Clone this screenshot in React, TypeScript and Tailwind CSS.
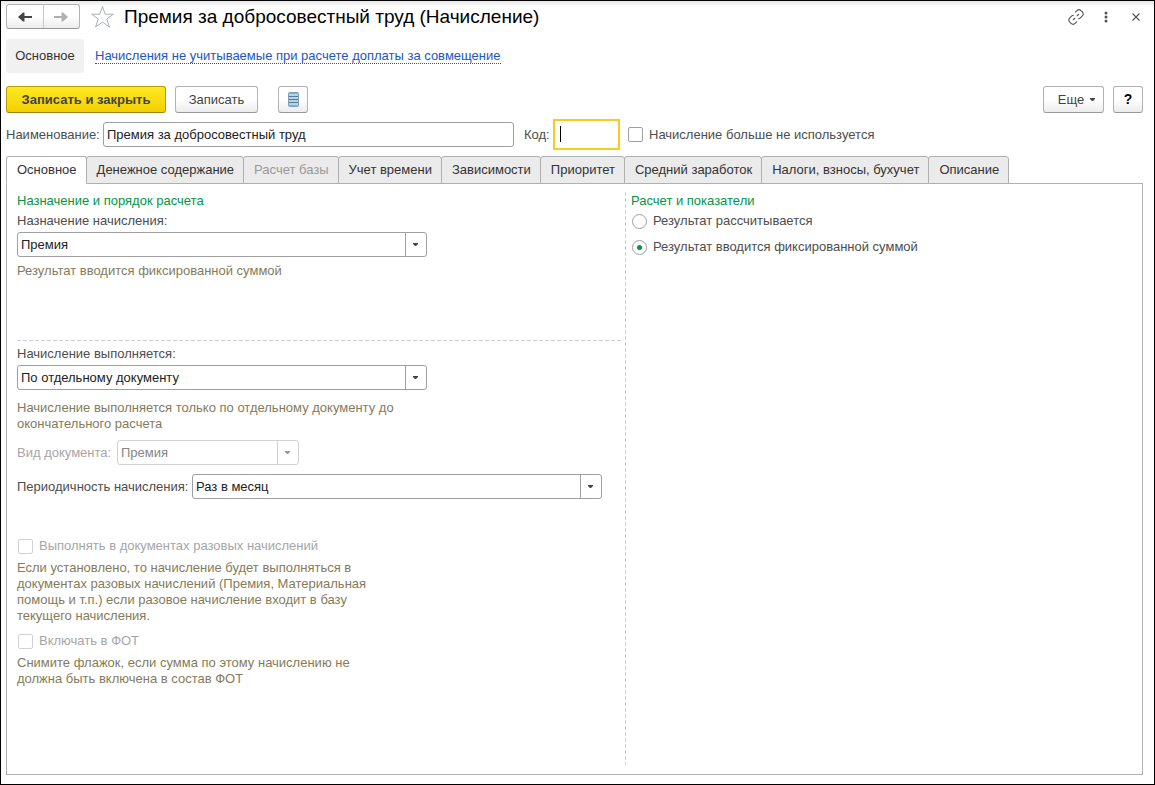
import React from "react";
import clsx from "clsx";

const tabs = [
  { title: "Основное", active: true },
  { title: "Денежное содержание" },
  { title: "Расчет базы", disabled: true },
  { title: "Учет времени" },
  { title: "Зависимости" },
  { title: "Приоритет" },
  { title: "Средний заработок" },
  { title: "Налоги, взносы, бухучет" },
  { title: "Описание" },
];

const buttonStyle =
  "flex h-[27px] items-center justify-center rounded-[3px] border border-[#b3b3b3] border-b-[#989898] bg-linear-to-b from-white from-50% to-[#ececec] text-[#444]";

const Caret = () => (
  <svg width="5" height="3" viewBox="0 0 5 3" fill="currentColor">
    <path d="M0 0h5v1L3 3H2L0 1z" />
  </svg>
);

type ComboProps = {
  id: string;
  value: string;
  disabled?: boolean;
  className?: string;
};

const Combo = ({ id, value, disabled, className }: ComboProps) => (
  <div
    className={clsx(
      "relative flex h-[25px] max-w-full rounded-[3px] border bg-white",
      disabled ? "border-[#d2d2d2]" : "border-[#a0a0a0]",
      className
    )}
  >
    <select
      id={id}
      disabled={disabled}
      defaultValue={value}
      className={clsx(
        "min-w-0 flex-1 appearance-none bg-transparent pl-[3px] opacity-100 outline-none",
        disabled ? "text-[#858585]" : "text-[#222]"
      )}
    >
      <option>{value}</option>
    </select>
    <span
      className={clsx(
        "pointer-events-none flex w-[21px] items-center justify-center border-l pr-px",
        disabled
          ? "border-[#d2d2d2] text-[#999]"
          : "border-[#a0a0a0] text-[#444]"
      )}
    >
      <Caret />
    </span>
  </div>
);

type CheckProps = { label: string; disabled?: boolean };

const Check = ({ label, disabled }: CheckProps) => (
  <label
    className={clsx(
      "flex items-center gap-[6px] leading-4",
      disabled ? "text-[#a6a6a6]" : "text-[#4d4d4d]"
    )}
  >
    <input
      type="checkbox"
      disabled={disabled}
      className={clsx(
        "size-[15px] shrink-0 appearance-none rounded-[2px] border bg-white",
        disabled ? "border-[#d2d2d2]" : "border-[#a0a0a0]"
      )}
    />
    {label}
  </label>
);

const Radio = ({ label, checked }: { label: string; checked?: boolean }) => (
  <label className="flex items-center gap-[6px] leading-4">
    <input
      type="radio"
      name="calculation"
      defaultChecked={checked}
      className="grid size-[15px] shrink-0 appearance-none place-items-center rounded-full border border-[#a0a0a0] bg-white before:size-[5px] before:rounded-full checked:before:bg-[#009646]"
    />
    {label}
  </label>
);

const Hint = ({ children }: { children: React.ReactNode }) => (
  <p className="leading-4 text-[#857b5a]">{children}</p>
);

const TitleBar = () => (
  <header className="flex h-[25px] items-center">
    <div className="flex h-[25px] w-[74px] rounded-[3px] border border-[#b3b3b3] border-b-[#989898] bg-linear-to-b from-white from-50% to-[#ececec]">
      <button
        type="button"
        aria-label="Назад"
        className="flex flex-1 items-center justify-center border-r border-[#c8c8c8] text-[#444]"
      >
        <svg width="14" height="10" viewBox="0 0 14 10" fill="currentColor">
          <path d="M0 5L5 0.500h1.500V4H14v2H6.500v3.500H5z" />
        </svg>
      </button>
      <button
        type="button"
        aria-label="Вперед"
        className="flex flex-1 items-center justify-center text-[#b0b0b0]"
      >
        <svg width="14" height="10" viewBox="0 0 14 10" fill="currentColor">
          <path d="M14 5L9 0.500H7.500V4H0v2h7.500v3.500H9z" />
        </svg>
      </button>
    </div>
    <button type="button" aria-label="Добавить в избранное" className="ml-[10px]">
      <svg width="25" height="24" viewBox="0 0 25 24" fill="none" stroke="#aab0b5">
        <path d="M12.500 1.500l2.700 7.700h8.200l-6.600 4.800 2.600 8-6.900-4.900-6.900 4.900 2.600-8-6.600-4.800h8.200z" />
      </svg>
    </button>
    <h1 className="ml-[9px] flex-1 text-[19px] leading-6 text-black">
      Премия за добросовестный труд (Начисление)
    </h1>
    <div className="flex items-center text-[#555]">
      <button type="button" aria-label="Получить ссылку">
        <svg width="16" height="16" viewBox="0 0 16 16" fill="none" stroke="currentColor" strokeWidth="1.100">
          <path d="M7.200 3.300l1.500-1.500a3.200 3.200 0 0 1 4.500 0l.9.900a3.200 3.200 0 0 1 0 4.500l-1.600 1.600a3.200 3.200 0 0 1-2.300.900" />
          <path d="M8.800 12.700l-1.500 1.500a3.200 3.200 0 0 1-4.500 0l-.9-.9a3.200 3.200 0 0 1 0-4.500l1.600-1.600a3.200 3.200 0 0 1 2.300-.900" />
          <path d="M5 11l2.200-2.200M8.800 7.200L11 5" />
        </svg>
      </button>
      <button type="button" aria-label="Сервис" className="ml-5">
        <svg width="4" height="12" viewBox="0 0 4 12" fill="currentColor">
          <circle cx="2" cy="2" r="1.500" />
          <circle cx="2" cy="6" r="1.500" />
          <circle cx="2" cy="10" r="1.500" />
        </svg>
      </button>
      <button type="button" aria-label="Закрыть" className="ml-6 mr-[3px]">
        <svg width="8" height="8" viewBox="0 0 8 8" fill="none" stroke="currentColor" strokeWidth="1.100">
          <path d="M0.500 0.500l7 7M7.500 0.500l-7 7" />
        </svg>
      </button>
    </div>
  </header>
);

const CommandBar = () => (
  <div className="mt-[13px] flex items-center">
    <button
      type="button"
      className="flex h-[27px] w-40 items-center justify-center rounded-[3px] border border-[#b89d00] border-b-[#9a8400] bg-linear-to-b from-[#ffe81f] to-[#f2d000] font-bold text-[#444]"
    >
      Записать и закрыть
    </button>
    <button type="button" className={clsx(buttonStyle, "ml-[9px] w-[83px]")}>
      Записать
    </button>
    <button
      type="button"
      aria-label="Список"
      className={clsx(buttonStyle, "ml-5 w-[30px]")}
    >
      <svg width="11" height="15" viewBox="0 0 11 15">
        <rect x="0.500" y="0.500" width="10" height="14" rx="1" fill="#b9d3e4" stroke="#7f9fb5" />
        <path d="M1 4.500h9M1 7.500h9M1 10.500h9" stroke="#4f7f9f" />
        <path d="M1 1.500h9M1 13.500h9" stroke="#8fb0c6" />
      </svg>
    </button>
    <button
      type="button"
      className={clsx(buttonStyle, "ml-auto w-[61px] gap-[6px] pl-[6px]")}
    >
      Еще
      <Caret />
    </button>
    <button
      type="button"
      className={clsx(buttonStyle, "ml-[9px] w-[30px] text-[14px] font-bold text-black")}
    >
      ?
    </button>
  </div>
);

const NameRow = () => (
  <div className="mt-[6px] flex h-[31px] items-center text-[#4d4d4d]">
    <label htmlFor="name" className="w-[97px] shrink-0 whitespace-nowrap">
      Наименование:
    </label>
    <input
      id="name"
      type="text"
      defaultValue="Премия за добросовестный труд"
      className="h-[25px] w-[411px] min-w-0 rounded-[3px] border border-[#a0a0a0] bg-white px-[3px] text-[#222] outline-none"
    />
    <label htmlFor="code" className="ml-[10px] w-[29px] shrink-0">
      Код:
    </label>
    <div className="relative mr-2 shrink-0">
      <input
        id="code"
        type="text"
        className="block h-[31px] w-[67px] border-2 border-[#f8cb1e] bg-white px-[6px] text-[#222] caret-transparent outline-none"
      />
      <span className="absolute left-[7px] top-[7px] h-4 w-px bg-black" />
    </div>
    <Check label="Начисление больше не используется" />
  </div>
);

const Tabs = () => (
  <div role="tablist" className="relative z-10 mt-[6px] -mb-px flex">
    {tabs.map((tab) => (
      <button
        key={tab.title}
        type="button"
        role="tab"
        aria-selected={!!tab.active}
        disabled={tab.disabled}
        className={clsx(
          "-mr-px h-7 whitespace-nowrap rounded-t-[3px] border border-[#b0b0b0] pl-[10px] pr-[9px]",
          tab.active ? "border-b-white bg-white" : "bg-[#ebebeb]",
          tab.disabled ? "text-[#999]" : "text-[#333]"
        )}
      >
        {tab.title}
      </button>
    ))}
  </div>
);

const SettingsColumn = () => (
  <div className="w-[604px] pt-px">
    <h2 className="leading-4 text-[#009646]">Назначение и порядок расчета</h2>
    <div className="flex min-h-[131px] flex-col pt-1">
      <label htmlFor="purpose" className="mb-[3px] leading-4">
        Назначение начисления:
      </label>
      <Combo id="purpose" value="Премия" className="w-[410px]" />
      <div className="mt-[6px]">
        <Hint>Результат вводится фиксированной суммой</Hint>
      </div>
    </div>
    <div className="h-px bg-[repeating-linear-gradient(90deg,#d0d0d0_0_4px,transparent_4px_6px)]" />
    <div className="flex flex-col pt-[5px]">
      <label htmlFor="execution" className="mb-[3px] leading-4">
        Начисление выполняется:
      </label>
      <Combo id="execution" value="По отдельному документу" className="w-[410px]" />
      <div className="mt-[10px] max-w-[400px]">
        <Hint>
          Начисление выполняется только по отдельному документу до
          окончательного расчета
        </Hint>
      </div>
    </div>
    <div className="mt-2 flex items-center">
      <label htmlFor="document" className="w-[100px] text-[#a6a6a6]">
        Вид документа:
      </label>
      <Combo id="document" value="Премия" disabled className="w-[182px]" />
    </div>
    <div className="mt-[9px] flex items-center">
      <label htmlFor="period" className="w-[175px] whitespace-nowrap">
        Периодичность начисления:
      </label>
      <Combo id="period" value="Раз в месяц" className="w-[410px]" />
    </div>
    <div className="mt-[39px] flex max-w-[360px] flex-col gap-[6px] pl-px">
      <Check label="Выполнять в документах разовых начислений" disabled />
      <div className="-ml-px">
        <Hint>
          Если установлено, то начисление будет выполняться в документах разовых
          начислений (Премия, Материальная помощь и т.п.) если разовое
          начисление входит в базу текущего начисления.
        </Hint>
      </div>
    </div>
    <div className="mt-[9px] flex max-w-[340px] flex-col gap-[6px] pl-px">
      <Check label="Включать в ФОТ" disabled />
      <div className="-ml-px">
        <Hint>
          Снимите флажок, если сумма по этому начислению не должна быть включена
          в состав ФОТ
        </Hint>
      </div>
    </div>
  </div>
);

export default function App() {
  return (
    <main className="flex min-h-screen flex-col border border-black bg-white bg-[linear-gradient(#e9e7e8,#fff_6px)] pb-[9px] pl-[5px] pr-[11px] pt-[3px] font-['Liberation_Sans',Arial,sans-serif] text-[13px]">
      <TitleBar />
      {/* Section navigation */}
      <nav className="mt-[10px] flex h-[34px] items-center gap-[11px]">
        <a
          href="#"
          className="flex h-full w-[78px] items-center justify-center rounded-[2px] bg-[#f1f1f1] text-[#333]"
        >
          Основное
        </a>
        <a
          href="#"
          className="border-b border-dotted border-[#1a56c4] leading-[14px] text-[#1a56c4]"
        >
          Начисления не учитываемые при расчете доплаты за совмещение
        </a>
      </nav>
      <CommandBar />
      <NameRow />
      <Tabs />
      <section className="flex flex-1 gap-1 border border-[#b0b0b0] px-[10px] pb-[9px] pt-2 text-[#4d4d4d]">
        <SettingsColumn />
        <div className="w-px bg-[repeating-linear-gradient(180deg,#d0d0d0_0_4px,transparent_4px_6px)]" />
        <div className="flex-1 pl-px pt-px">
          <h2 className="leading-4 text-[#009646]">Расчет и показатели</h2>
          <div className="mt-1 flex flex-col gap-[10px] pl-px">
            <Radio label="Результат рассчитывается" />
            <Radio label="Результат вводится фиксированной суммой" checked />
          </div>
        </div>
      </section>
    </main>
  );
}
